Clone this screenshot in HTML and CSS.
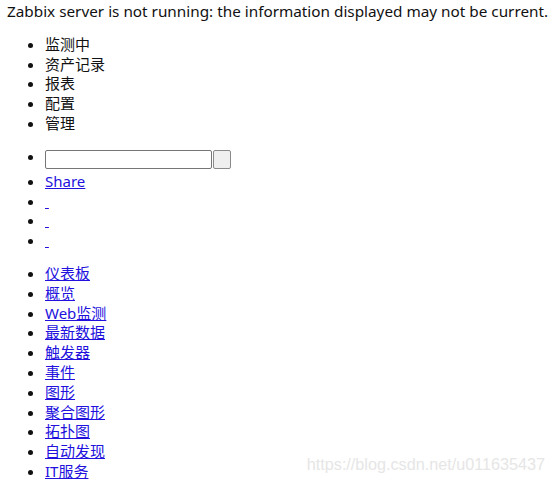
FILE: index.html
```html
<!DOCTYPE html>
<html lang="zh-CN">
<head>
  <meta charset="UTF-8" />
  <title>Zabbix</title>
  <link rel="stylesheet" href="styles.css">
</head>
<body>
  <div class="msg">Zabbix server is not running: the information displayed may not be current.</div>

  <ul class="menu">
    <li>监测中</li>
    <li>资产记录</li>
    <li>报表</li>
    <li>配置</li>
    <li>管理</li>
  </ul>

  <ul class="menu">
    <li class="search">
      <input type="text" class="search-box"><button class="search-btn"></button>
    </li>
    <li><a href="#">Share</a></li>
    <li><a href="#">&nbsp;</a></li>
    <li><a href="#">&nbsp;</a></li>
    <li><a href="#">&nbsp;</a></li>
  </ul>

  <ul class="menu">
    <li><a href="#">仪表板</a></li>
    <li><a href="#">概览</a></li>
    <li><a href="#">Web监测</a></li>
    <li><a href="#">最新数据</a></li>
    <li><a href="#">触发器</a></li>
    <li><a href="#">事件</a></li>
    <li><a href="#">图形</a></li>
    <li><a href="#">聚合图形</a></li>
    <li><a href="#">拓扑图</a></li>
    <li><a href="#">自动发现</a></li>
    <li><a href="#">IT服务</a></li>
  </ul>

  <div class="watermark">https://blog.csdn.net/u011635437</div>
</body>
</html>
```

FILE: styles.css
```css
body {
  margin: 0;
  padding: 2px 7px;
  font-family: "Noto Sans", "Noto Sans CJK SC", sans-serif;
  font-size: 15px;
  line-height: 19.8px;
  color: #111;
  background: #fff;
}

.msg {
  white-space: nowrap;
  font-size: 15.3px;
}

/* Menus */
.menu {
  margin: 13px 0;
  padding-left: 38px;
}

.menu a {
  color: #2211dd;
  text-decoration: underline;
}

.search {
  height: 25px;
}

.search-box {
  box-sizing: border-box;
  width: 167px;
  height: 19px;
  margin: 3px 0 0;
  padding: 0 2px;
  border: 1px solid #767676;
  border-radius: 2px;
  vertical-align: top;
}

.search-btn {
  box-sizing: border-box;
  width: 18px;
  height: 19px;
  margin: 3px 0 0 1px;
  padding: 0;
  border: 1px solid #8a8a8a;
  border-radius: 2px;
  background: #efefef;
  vertical-align: top;
}

.watermark {
  position: absolute;
  right: 9px;
  top: 455px;
  font-family: "Liberation Sans", sans-serif;
  font-size: 16.2px;
  color: #e6e6e6;
}
```
